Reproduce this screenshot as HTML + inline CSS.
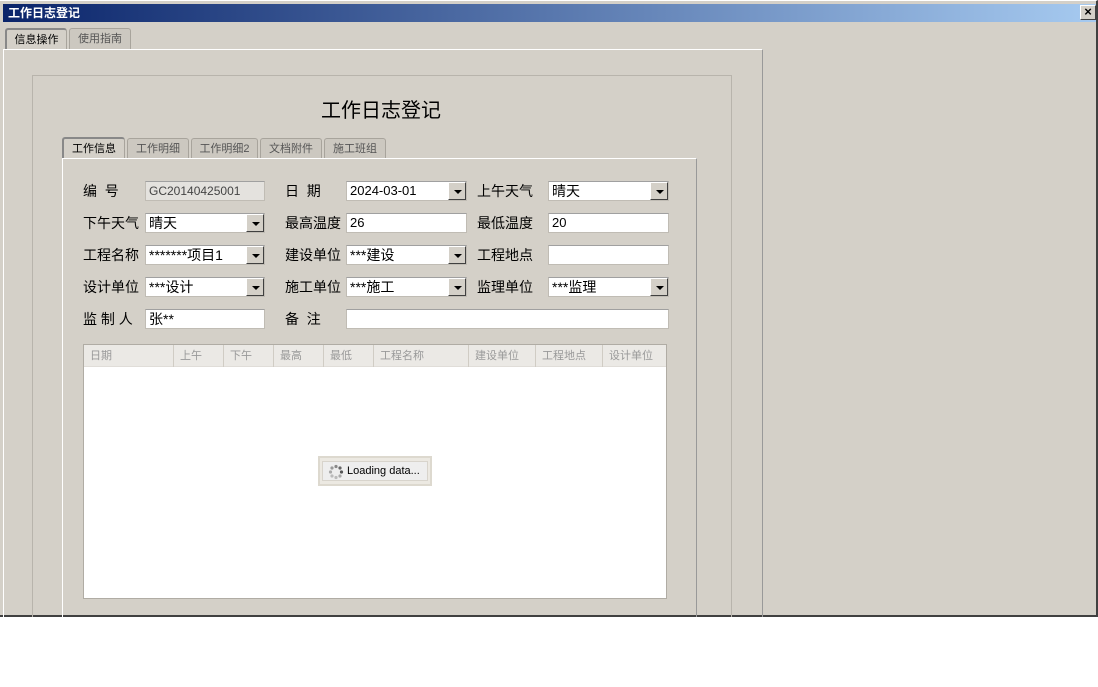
<!DOCTYPE html>
<html><head><meta charset="utf-8"><style>
*{box-sizing:border-box;margin:0;padding:0}
body{width:1098px;height:687px;background:#fff;position:relative;overflow:hidden;font-family:"Liberation Sans","Noto Sans CJK SC",sans-serif;font-size:12px;color:#000}
.a{position:absolute}
.win{left:0;top:0;width:1098px;height:617px;background:#d4d0c8;border-bottom:2px solid #404040;border-right:2px solid #404040;border-top:1px solid #fff}
.title{left:3px;top:4px;width:1093px;height:18px;background:linear-gradient(90deg,#0a246a,#a6caf0);color:#fff;font-weight:bold;font-size:12px;line-height:18px;padding-left:5px}
.close{left:1080px;top:5px;width:16px;height:15px;background:#d4d0c8;border:1px solid;border-color:#fff #404040 #404040 #fff;font-size:13px;line-height:12px;text-align:center;font-weight:bold;color:#000}
.tab{height:21px;border:1px solid #a8a49c;border-bottom:none;border-radius:3px 3px 0 0;background:#ccc8c0;color:#555;text-align:center;line-height:20px;font-size:11px}
.tab.on{background:#d4d0c8;color:#000;border-top:2px solid #888;border-left:2px solid #888}
.lbl{font-size:14px;line-height:20px}
.in{height:20px;background:#fff;border:1px solid #c0bcb4;border-top-color:#a0a0a0;font-size:14px;line-height:18px;padding-left:3px;font-family:"Liberation Sans","Noto Sans CJK SC",sans-serif}
.dd{position:absolute;right:0;top:0;width:18px;height:18px;background:#d4d0c8;border:1px solid;border-color:#fff #404040 #404040 #fff}
.dd:after{content:"";position:absolute;left:5px;top:7px;border-left:4px solid transparent;border-right:4px solid transparent;border-top:4px solid #000}
.hd{top:0;height:22px;border-right:1px solid #d0ccc4;color:#999;font-size:11px;line-height:22px;padding-left:6px}
</style></head><body>
<div class="a win"></div>
<div class="a title">工作日志登记</div>
<div class="a close">×</div>
<div class="a tab on" style="left:5px;top:28px;width:62px">信息操作</div>
<div class="a tab" style="left:69px;top:28px;width:62px">使用指南</div>
<div class="a" style="left:3px;top:49px;width:760px;height:568px;border-top:1px solid #fff;border-left:1px solid #fff;border-right:1px solid #999"></div>
<div class="a" style="left:32px;top:75px;width:700px;height:542px;border:1px solid #b8b4ac;border-bottom:none"></div>
<div class="a" style="left:0;top:94px;width:762px;text-align:center;font-size:20px">工作日志登记</div>
<div class="a tab on" style="left:62px;top:137px;width:63px">工作信息</div>
<div class="a tab" style="left:127px;top:138px;width:62px">工作明细</div>
<div class="a tab" style="left:191px;top:138px;width:67px">工作明细2</div>
<div class="a tab" style="left:260px;top:138px;width:62px">文档附件</div>
<div class="a tab" style="left:324px;top:138px;width:62px">施工班组</div>
<div class="a" style="left:62px;top:158px;width:635px;height:459px;border-top:1px solid #fff;border-left:1px solid #fff;border-right:1px solid #999"></div>

<div class="a lbl" style="left:83px;top:181px">编&nbsp;&nbsp;号</div>
<div class="a in" style="left:145px;top:181px;width:120px;background:#e4e2de;font-size:12px;color:#444">GC20140425001</div>
<div class="a lbl" style="left:285px;top:181px">日&nbsp;&nbsp;期</div>
<div class="a in" style="left:346px;top:181px;width:121px;font-size:13px">2024-03-01<span class="dd"></span></div>
<div class="a lbl" style="left:477px;top:181px">上午天气</div>
<div class="a in" style="left:548px;top:181px;width:121px">晴天<span class="dd"></span></div>

<div class="a lbl" style="left:83px;top:213px">下午天气</div>
<div class="a in" style="left:145px;top:213px;width:120px">晴天<span class="dd"></span></div>
<div class="a lbl" style="left:285px;top:213px">最高温度</div>
<div class="a in" style="left:346px;top:213px;width:121px;font-size:13px">26</div>
<div class="a lbl" style="left:477px;top:213px">最低温度</div>
<div class="a in" style="left:548px;top:213px;width:121px;font-size:13px">20</div>

<div class="a lbl" style="left:83px;top:245px">工程名称</div>
<div class="a in" style="left:145px;top:245px;width:120px">*******项目1<span class="dd"></span></div>
<div class="a lbl" style="left:285px;top:245px">建设单位</div>
<div class="a in" style="left:346px;top:245px;width:121px">***建设<span class="dd"></span></div>
<div class="a lbl" style="left:477px;top:245px">工程地点</div>
<div class="a in" style="left:548px;top:245px;width:121px"></div>

<div class="a lbl" style="left:83px;top:277px">设计单位</div>
<div class="a in" style="left:145px;top:277px;width:120px">***设计<span class="dd"></span></div>
<div class="a lbl" style="left:285px;top:277px">施工单位</div>
<div class="a in" style="left:346px;top:277px;width:121px">***施工<span class="dd"></span></div>
<div class="a lbl" style="left:477px;top:277px">监理单位</div>
<div class="a in" style="left:548px;top:277px;width:121px">***监理<span class="dd"></span></div>

<div class="a lbl" style="left:83px;top:309px">监&nbsp;制&nbsp;人</div>
<div class="a in" style="left:145px;top:309px;width:120px">张**</div>
<div class="a lbl" style="left:285px;top:309px">备&nbsp;&nbsp;注</div>
<div class="a in" style="left:346px;top:309px;width:323px"></div>

<div class="a" style="left:83px;top:344px;width:584px;height:255px;background:#fff;border:1px solid #b0aca4;overflow:hidden">
<div class="a" style="left:0;top:0;width:584px;height:22px;background:#ebe9e5;border-bottom:1px solid #e0ddd8"></div>
<div class="a hd" style="left:0;width:90px">日期</div>
<div class="a hd" style="left:90px;width:50px">上午</div>
<div class="a hd" style="left:140px;width:50px">下午</div>
<div class="a hd" style="left:190px;width:50px">最高</div>
<div class="a hd" style="left:240px;width:50px">最低</div>
<div class="a hd" style="left:290px;width:95px">工程名称</div>
<div class="a hd" style="left:385px;width:67px">建设单位</div>
<div class="a hd" style="left:452px;width:67px">工程地点</div>
<div class="a hd" style="left:519px;width:65px">设计单位</div>
</div>
<div class="a" style="left:318px;top:456px;width:114px;height:30px;background:#ece9e2;border:2px solid #ddd9cf;padding:3px 2px">
<div style="border:1px solid #d8d4cc;background:#eeeeee;height:20px;line-height:18px;font-size:11px;padding-left:24px;position:relative">
<svg style="position:absolute;left:5px;top:2px" width="16" height="16" viewBox="0 0 16 16"><g fill="#888"><circle cx="8" cy="2.5" r="1.6"/><circle cx="12" cy="4" r="1.6" fill="#666"/><circle cx="13.5" cy="8" r="1.6" fill="#555"/><circle cx="12" cy="12" r="1.6" fill="#aaa"/><circle cx="8" cy="13.5" r="1.6" fill="#bbb"/><circle cx="4" cy="12" r="1.6" fill="#bbb"/><circle cx="2.5" cy="8" r="1.6" fill="#aaa"/><circle cx="4" cy="4" r="1.6" fill="#999"/></g></svg>Loading data...</div></div>
</body></html>
